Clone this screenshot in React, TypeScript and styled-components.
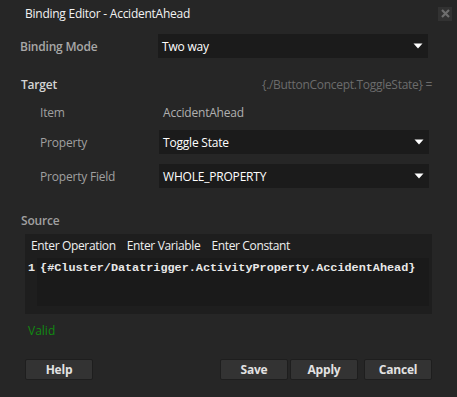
import styled, { createGlobalStyle } from "styled-components";

const GlobalStyle = createGlobalStyle`
  html, body {
    margin: 0;
    padding: 0;
    background: #262626;
  }
`;

const Dialog = styled.div`
  width: 457px;
  height: 397px;
  background: #262626;
  font-family: "Open Sans", "Noto Sans", sans-serif;
  font-size: 12px;
  color: #e6e6e6;
  display: flex;
  flex-direction: column;
  box-sizing: border-box;
`;

const TitleBar = styled.div`
  height: 27px;
  display: flex;
  align-items: center;
  justify-content: space-between;
  padding: 0 5px 0 25px;
  flex-shrink: 0;
`;

const Title = styled.span`
  color: #f2f2f2;
  font-size: 12px;
  letter-spacing: -0.25px;
`;

const CloseBox = styled.div`
  width: 14px;
  height: 14px;
  background: #323232;
  display: flex;
  align-items: center;
  justify-content: center;
`;

const Body = styled.div`
  display: flex;
  flex-direction: column;
  padding: 0 25px 0 20px;
`;

const Row = styled.div<{ $indent?: boolean; $top?: number }>`
  display: grid;
  grid-template-columns: ${(p) => (p.$indent ? "119px" : "138px")} 270px;
  align-items: center;
  height: 24px;
  padding-left: ${(p) => (p.$indent ? "20px" : "0")};
  margin-top: ${(p) => p.$top ?? 0}px;
`;

const Label = styled.span<{ $strong?: boolean }>`
  color: ${(p) => (p.$strong ? "#a8a8a8" : "#a0a0a0")};
  font-weight: ${(p) => (p.$strong ? 600 : 400)};
  letter-spacing: -0.2px;
`;

const Value = styled.span`
  color: #b0b0b0;
  padding-left: 4px;
  letter-spacing: -0.2px;
`;

const Select = styled.div`
  height: 24px;
  background: #1b1b1b;
  display: flex;
  align-items: center;
  justify-content: space-between;
  padding: 0 5px 0 4px;
  color: #ffffff;
  letter-spacing: -0.2px;
`;

const SectionHead = styled.div<{ $top: number }>`
  display: flex;
  justify-content: space-between;
  align-items: center;
  height: 16px;
  margin-top: ${(p) => p.$top}px;
  padding-left: 1px;
`;

const SectionTitle = styled.span<{ $dim?: boolean }>`
  color: ${(p) => (p.$dim ? "#a0a0a0" : "#d4d4d4")};
  font-weight: 600;
  letter-spacing: -0.2px;
`;

const Expression = styled.span`
  color: #6c6c6c;
  letter-spacing: -0.3px;
`;

const Editor = styled.div`
  margin: 6px 0 0 5px;
  height: 80px;
  background: #1e1e1e;
  display: flex;
  flex-direction: column;
`;

const EditorTools = styled.div`
  display: flex;
  gap: 11px;
  height: 22px;
  align-items: center;
  padding-left: 6px;
  color: #f0f0f0;
  letter-spacing: -0.35px;
`;

const CodeArea = styled.div`
  margin: 2px 3px 8px 12px;
  flex: 1;
  background: #1a1a1a;
`;

const CodeLine = styled.div`
  display: flex;
  gap: 5px;
  margin-left: -9px;
  height: 20px;
  align-items: center;
  font-family: "Liberation Mono", "Courier New", monospace;
  font-size: 11.8px;
  font-weight: bold;
  color: #e8e8e8;
  white-space: nowrap;
`;

const Status = styled.div`
  margin: 8px 0 0 8px;
  color: #118a11;
  height: 16px;
  display: flex;
  align-items: center;
`;

const Footer = styled.div`
  display: flex;
  margin: 21px 0 0 5px;
  align-items: center;
`;

const Button = styled.button<{ $gap?: number }>`
  width: 68px;
  height: 21px;
  background: #333333;
  border: 1px solid #1e1e1e;
  border-radius: 2px;
  color: #e2e2e2;
  font-family: "Open Sans", "Noto Sans", sans-serif;
  font-size: 12px;
  font-weight: 700;
  letter-spacing: -0.2px;
  padding: 0;
  margin-left: ${(p) => p.$gap ?? 0}px;
`;

const Spacer = styled.div`
  flex: 1;
`;

function Arrow() {
  return (
    <svg width="10" height="6" viewBox="0 0 10 6">
      <path d="M0.5 0.5 H9.5 L5 5.5 Z" fill="#ffffff" />
    </svg>
  );
}

function Dropdown({ value }: { value: string }) {
  return (
    <Select>
      <span>{value}</span>
      <Arrow />
    </Select>
  );
}

export default function App() {
  return (
    <>
      <GlobalStyle />
      <Dialog>
        <TitleBar>
          <Title>Binding Editor - AccidentAhead</Title>
          <CloseBox>
            <svg width="9" height="9" viewBox="0 0 9 9">
              <path
                d="M1 1 L8 8 M8 1 L1 8"
                stroke="#6e6e6e"
                strokeWidth="2.2"
              />
            </svg>
          </CloseBox>
        </TitleBar>
        <Body>
          <Row $top={7}>
            <Label $strong>Binding Mode</Label>
            <Dropdown value="Two way" />
          </Row>

          <SectionHead $top={18}>
            <SectionTitle>Target</SectionTitle>
            <Expression>{"{./ButtonConcept.ToggleState} ="}</Expression>
          </SectionHead>
          <Row $indent $top={8}>
            <Label>Item</Label>
            <Value>AccidentAhead</Value>
          </Row>
          <Row $indent $top={6}>
            <Label>Property</Label>
            <Dropdown value="Toggle State" />
          </Row>
          <Row $indent $top={10}>
            <Label>Property Field</Label>
            <Dropdown value="WHOLE_PROPERTY" />
          </Row>

          <SectionHead $top={24}>
            <SectionTitle $dim>Source</SectionTitle>
          </SectionHead>
          <Editor>
            <EditorTools>
              <span>Enter Operation</span>
              <span>Enter Variable</span>
              <span>Enter Constant</span>
            </EditorTools>
            <CodeArea>
              <CodeLine>
                <span>1</span>
                <span>{"{#Cluster/Datatrigger.ActivityProperty.AccidentAhead}"}</span>
              </CodeLine>
            </CodeArea>
          </Editor>
          <Status>Valid</Status>

          <Footer>
            <Button>Help</Button>
            <Spacer />
            <Button>Save</Button>
            <Button $gap={2}>Apply</Button>
            <Button $gap={6}>Cancel</Button>
          </Footer>
        </Body>
      </Dialog>
    </>
  );
}
